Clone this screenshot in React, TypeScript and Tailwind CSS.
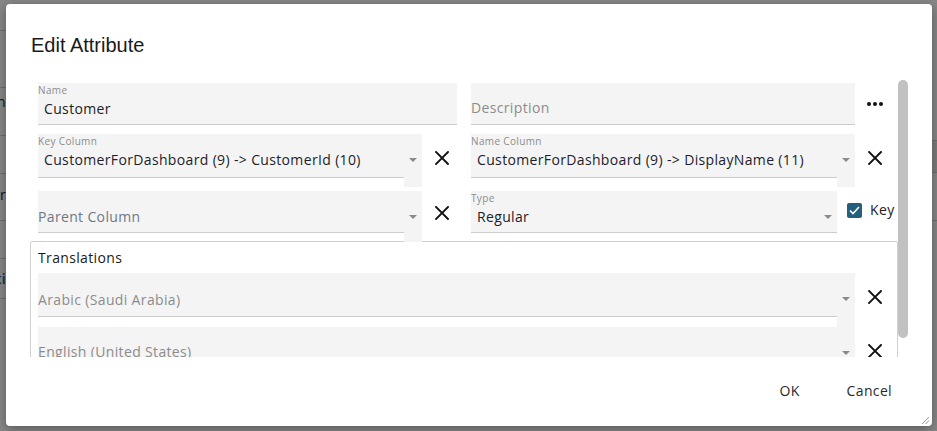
import React from 'react';

const FIELD_BG = 'bg-[#f4f4f4]';

const CloseIcon: React.FC = () => (
  <svg width="14" height="14" viewBox="0 0 14 14" className="block">
    <path d="M1 1 L13 13 M13 1 L1 13" stroke="#111" strokeWidth="1.9" strokeLinecap="square" />
  </svg>
);

const Arrow: React.FC = () => (
  <svg width="8" height="4" viewBox="0 0 8 4" className="block">
    <path d="M0 0 L8 0 L4 4 Z" fill="#8a8a8a" />
  </svg>
);

// floating-label input, like the dialog's text fields
const TextField: React.FC<{ width: string; label?: string; value?: string; placeholder?: string }> = ({
  width,
  label,
  value,
  placeholder,
}) => (
  <div className={`${width} h-[42px] ${FIELD_BG} border-b border-[#cccccc]`}>
    {label ? (
      <>
        <div className="text-[10px] leading-[12px] text-[#8c8c8c] pt-[1px]">{label}</div>
        <div className="pl-[6px] text-[14px] leading-[20px] text-[#212121] mt-[3px]">{value}</div>
      </>
    ) : (
      <div className="text-[14px] leading-[20px] text-[#8c8c8c] pt-[15px]">{placeholder}</div>
    )}
  </div>
);

// the select has an odd arrow column which hangs below the input
const SelectField: React.FC<{
  mainWidth: string;
  label?: string;
  value?: string;
  placeholder?: string;
  placeholderColor?: string;
  mainH: string;
  extraH: string;
  textTop: string;
}> = ({ mainWidth, label, value, placeholder, placeholderColor = 'text-[#8c8c8c]', mainH, extraH, textTop }) => (
  <div className="flex items-start">
    <div className={`${mainWidth} ${mainH} ${FIELD_BG} border-b border-[#cccccc]`}>
      {label ? (
        <>
          <div className="text-[10px] leading-[12px] text-[#8c8c8c] pt-[1px]">{label}</div>
          <div className="pl-[6px] text-[14px] leading-[20px] text-[#1d1d2b] mt-[3px] whitespace-nowrap">{value}</div>
        </>
      ) : (
        <div className={`text-[14px] leading-[20px] ${placeholderColor} ${textTop} whitespace-nowrap`}>{placeholder}</div>
      )}
    </div>
    <div className={`w-[18px] ${extraH} ${FIELD_BG} pl-[5px] pt-[24px]`}>
      <Arrow />
    </div>
  </div>
);

const XZone: React.FC<{ width: string; top?: string }> = ({ width, top = 'pt-[17px]' }) => (
  <div className={`${width} ${top} pl-[13px]`}>
    <CloseIcon />
  </div>
);

const Dots: React.FC = () => (
  <div className="flex gap-[2px]">
    <span className="w-[4px] h-[4px] rounded-full bg-[#111]" />
    <span className="w-[4px] h-[4px] rounded-full bg-[#111]" />
    <span className="w-[4px] h-[4px] rounded-full bg-[#111]" />
  </div>
);

const translations = ['Arabic (Saudi Arabia)', 'English (United States)'];

const BackdropColumn: React.FC<{ rows: { h: string; text?: string; cls?: string; shade?: string }[]; width: string }> = ({
  rows,
  width,
}) => (
  <div className={`${width} overflow-hidden flex flex-col`}>
    {rows.map((r, i) => (
      <div key={i} className={`${r.h} border-b border-[#6f6f6f] flex justify-end items-center ${r.shade ?? ''}`}>
        {r.text && <span className={`whitespace-nowrap text-[14px] ${r.cls ?? 'text-[#111]'}`}>{r.text}</span>}
      </div>
    ))}
  </div>
);

export default function App() {
  return (
    <div className="relative w-[937px] h-[431px] overflow-hidden bg-[#878787] font-['Open_Sans',sans-serif] tracking-[0.35px]">
      {/* page behind the modal */}
      <div className="flex h-full">
        <BackdropColumn
          width="w-[6px]"
          rows={[
            { h: 'h-[31px]' },
            { h: 'h-[57px]' },
            { h: 'h-[48px]', text: 'Column' , cls: 'text-[#111] -mt-[20px]' },
            { h: 'h-[38px]' },
            { h: 'h-[47px]', text: 'Order', cls: 'text-[#111] -mt-[6px]' },
            { h: 'h-[38px]' },
            { h: 'h-[40px]', text: 'Attributi', cls: 'text-[#0d2a4a] font-semibold' },
          ]}
        />
        <div className="flex-1" />
        <BackdropColumn
          width="w-[5px]"
          rows={[
            { h: 'h-[141px]' },
            { h: 'h-[32px]', shade: 'bg-[#7c7c7c]' },
            { h: 'h-[48px]' },
          ]}
        />
      </div>

      {/* modal */}
      <div className="absolute left-[6px] top-[4px] w-[926px] h-[422px] bg-white rounded-[4px] shadow-[0_3px_12px_rgba(0,0,0,0.35)] flex flex-col">
        <div className="pl-[25px] pt-[29px] h-[76px] text-[20px] leading-[24px] text-[#1a1a1a] tracking-normal font-['Liberation_Sans',Arial,sans-serif]">
          Edit Attribute
        </div>

        <div className="flex ml-[24px] h-[277px]">
          <div className="w-[868px] overflow-hidden pt-[3px]">
            {/* row 1 */}
            <div className="flex pl-[8px]">
              <TextField width="w-[419px]" label="Name" value="Customer" />
              <div className="w-[14px]" />
              <TextField width="w-[384px]" placeholder="Description" />
              <div className="w-[42px] pt-[19px] pl-[12px]">
                <Dots />
              </div>
            </div>

            {/* row 2 */}
            <div className="flex pl-[8px] mt-[9px] h-[57px]">
              <SelectField
                mainWidth="w-[366px]"
                mainH="h-[44px]"
                extraH="h-[53px]"
                textTop="pt-[15px]"
                label="Key Column"
                value="CustomerForDashboard (9) -> CustomerId (10)"
              />
              <XZone width="w-[49px]" />
              <SelectField
                mainWidth="w-[366px]"
                mainH="h-[44px]"
                extraH="h-[53px]"
                textTop="pt-[15px]"
                label="Name Column"
                value="CustomerForDashboard (9) -> DisplayName (11)"
              />
              <XZone width="w-[42px]" />
            </div>

            {/* row 3 */}
            <div className="flex pl-[8px] h-[50px]">
              <SelectField
                mainWidth="w-[366px]"
                mainH="h-[42px]"
                extraH="h-[51px]"
                textTop="pt-[16px]"
                placeholder="Parent Column"
                placeholderColor="text-[#6e7885]"
              />
              <XZone width="w-[49px]" top="pt-[15px]" />
              <div className={`w-[366px] h-[42px] ${FIELD_BG} border-b border-[#cccccc] flex items-start`}>
                <div className="flex-1">
                  <div className="text-[10px] leading-[12px] text-[#8c8c8c] pt-[1px]">Type</div>
                  <div className="pl-[6px] text-[14px] leading-[20px] text-[#1d1d2b] mt-[3px]">Regular</div>
                </div>
                <div className="pt-[24px] pr-[5px]">
                  <Arrow />
                </div>
              </div>
              <div className="flex items-center ml-[10px] h-[42px] -mt-[2px]">
                <span className="w-[15px] h-[15px] rounded-[2px] bg-[#22607d] flex items-center justify-center">
                  <svg width="11" height="9" viewBox="0 0 11 9">
                    <path d="M1 4.5 L4 7.5 L10 1" stroke="white" strokeWidth="1.6" fill="none" />
                  </svg>
                </span>
                <span className="ml-[8px] text-[14px] leading-[20px] text-[#222]">Key</span>
              </div>
            </div>

            {/* translations */}
            <div className="border border-[#d0d0d0] rounded-t-[2px] pt-[8px]">
              <div className="pl-[7px] text-[14px] leading-[16px] text-[#1a1a1a]">Translations</div>
              <div className="mt-[7px] flex flex-col">
                {translations.map((t, i) => (
                  <div key={t} className="flex pl-[7px] h-[54px]">
                    <SelectField
                      mainWidth="w-[799px]"
                      mainH="h-[44px]"
                      extraH="h-[54px]"
                      textTop={i === 0 ? 'pt-[17px]' : 'pt-[15px]'}
                      placeholder={t}
                    />
                    <XZone width="w-[42px]" />
                  </div>
                ))}
              </div>
            </div>
          </div>

          {/* scrollbar */}
          <div className="w-[10px]">
            <div className="h-[258px] rounded-full bg-[#c1c1c1]" />
          </div>
        </div>

        <div className="flex-1 flex justify-end items-start pt-[24px] pr-[32px] gap-[31px] text-[14px] leading-[20px] text-[#2a2a2a]">
          <button className="px-[8px]">OK</button>
          <button className="px-[8px]">Cancel</button>
        </div>

        {/* resize grip */}
        <svg className="absolute right-[2px] bottom-[1px]" width="9" height="9" viewBox="0 0 9 9">
          <path d="M1 8 L8 1 M4.5 8 L8 4.5" stroke="#9a9a9a" strokeWidth="1" />
        </svg>
      </div>
    </div>
  );
}
